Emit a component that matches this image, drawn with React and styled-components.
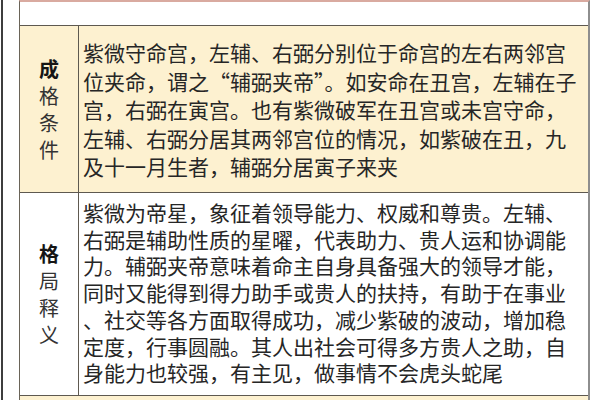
import React from "react";
import styled, { createGlobalStyle } from "styled-components";

const GlobalStyle = createGlobalStyle`
  html, body { margin: 0; padding: 0; background: #ffffff; }
  body {
    width: 600px;
    height: 400px;
    overflow: hidden;
    font-family: "Noto Sans CJK SC", "Noto Sans", sans-serif;
    color: #262626;
  }
  *, *::before, *::after { box-sizing: border-box; }
`;

const Page = styled.div`
  display: flex;
  height: 400px;
  background: #ffffff;
`;

const EdgeLine = styled.div`
  flex: none;
  width: 2px;
  margin-left: 1px;
  background: #3d3d3d;
`;

const Table = styled.div`
  flex: none;
  margin-left: 16px;
  width: 571px;
  height: 400px;
  border-left: 1px solid #6a6458;
  border-right: 2px solid #8e8e8e;
  border-top: 2px solid #d9aaa0;
  display: grid;
  grid-template-columns: 58px 1fr;
  align-content: start;
  overflow: hidden;
`;

const HeadRow = styled.div`
  grid-column: 1 / -1;
  height: 24px;
  background: #ffffff;
  border-bottom: 1px solid #5e5950;
`;

const LabelCell = styled.div`
  height: ${(p) => p.$h}px;
  display: flex;
  flex-direction: column;
  align-items: center;
  justify-content: center;
  background: ${(p) => (p.$cream ? "#fdf1d0" : "#ffffff")};
  border-bottom: 1px solid #5e5950;
  font-size: 20px;
  line-height: 27px;
`;

const LabelChar = styled.span`
  display: block;
  font-weight: ${(p) => (p.$bold ? 700 : 400)};
  color: ${(p) => (p.$bold ? "#151515" : "#333333")};
`;

const TextCell = styled.div`
  height: ${(p) => p.$h}px;
  background: ${(p) => (p.$cream ? "#fdf1d0" : "#ffffff")};
  border-left: 1px solid #5e5950;
  border-bottom: 1px solid #5e5950;
  padding: ${(p) => p.$padTop}px 0 0 4px;
  font-size: 21px;
  line-height: ${(p) => p.$lh}px;
  color: #262626;
  overflow: hidden;
`;

const Line = styled.span`
  display: block;
  white-space: nowrap;
`;

const FootRow = styled.div`
  grid-column: 1 / -1;
  height: 10px;
  background: #fdf1d0;
`;

const rows = [
  {
    label: "成格条件",
    cream: true,
    h: 167,
    padTop: 12,
    lh: 28.6,
    lines: [
      "紫微守命宫，左辅、右弼分别位于命宫的左右两邻宫",
      "位夹命，谓之“辅弼夹帝”。如安命在丑宫，左辅在子",
      "宫，右弼在寅宫。也有紫微破军在丑宫或未宫守命，",
      "左辅、右弼分居其两邻宫位的情况，如紫破在丑，九",
      "及十一月生者，辅弼分居寅子来夹",
    ],
  },
  {
    label: "格局释义",
    cream: false,
    h: 203,
    padTop: 6,
    lh: 26.7,
    lines: [
      "紫微为帝星，象征着领导能力、权威和尊贵。左辅、",
      "右弼是辅助性质的星曜，代表助力、贵人运和协调能",
      "力。辅弼夹帝意味着命主自身具备强大的领导才能，",
      "同时又能得到得力助手或贵人的扶持，有助于在事业",
      "、社交等各方面取得成功，减少紫破的波动，增加稳",
      "定度，行事圆融。其人出社会可得多方贵人之助，自",
      "身能力也较强，有主见，做事情不会虎头蛇尾",
    ],
  },
];

export default function App() {
  return (
    <>
      <GlobalStyle />
      <Page>
        <EdgeLine />
        <Table>
          <HeadRow />
          {rows.map((r) => (
            <React.Fragment key={r.label}>
              <LabelCell $cream={r.cream} $h={r.h}>
                {Array.from(r.label).map((c, i) => (
                  <LabelChar key={i} $bold={i === 0}>
                    {c}
                  </LabelChar>
                ))}
              </LabelCell>
              <TextCell $cream={r.cream} $h={r.h} $padTop={r.padTop} $lh={r.lh}>
                {r.lines.map((l, i) => (
                  <Line key={i}>{l}</Line>
                ))}
              </TextCell>
            </React.Fragment>
          ))}
          <FootRow />
        </Table>
      </Page>
    </>
  );
}
